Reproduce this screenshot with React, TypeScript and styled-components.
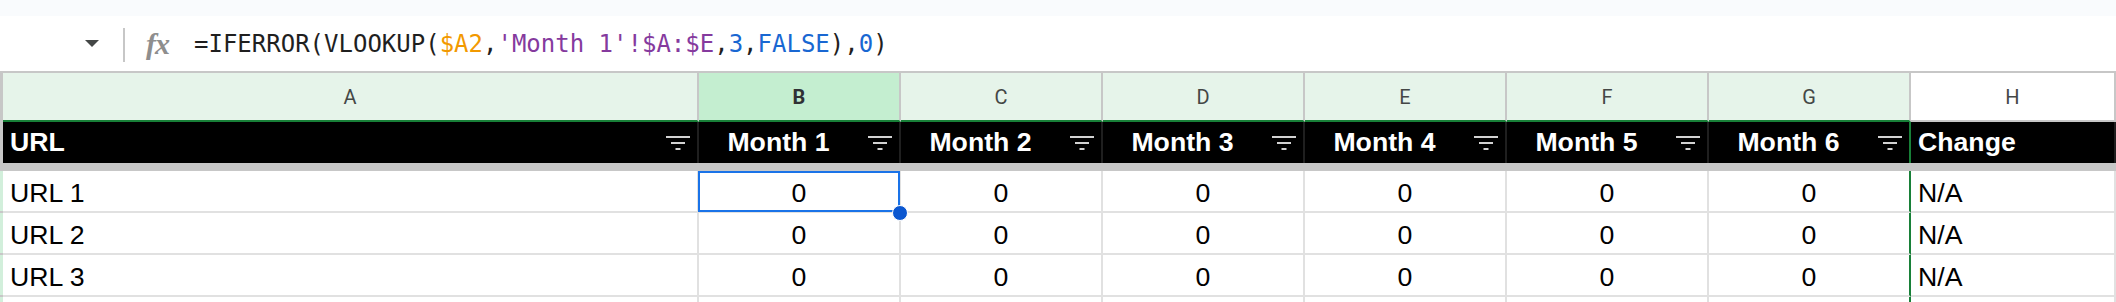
import React from 'react';
import styled, { createGlobalStyle } from 'styled-components';

const colors = {
  grid: '#c7c7c7',
  cellLine: '#e1e1e1',
  mint: '#e6f4ea',
  mintActive: '#c4eed0',
  green: '#188038',
  blue: '#1a73e8',
  handle: '#0b57d0',
  letter: '#444746',
  stripe: '#d2efdb',
};

const COLUMNS = '3px 696px repeat(6, 202px) 1fr';
const LETTERS = ['A', 'B', 'C', 'D', 'E', 'F', 'G', 'H'];
const MONTHS = ['Month 1', 'Month 2', 'Month 3', 'Month 4', 'Month 5', 'Month 6'];
const ROWS = ['URL 1', 'URL 2', 'URL 3', ''];

const GlobalStyle = createGlobalStyle`
html, body {
  margin: 0;
  padding: 0;
  background: #fff;
  overflow: hidden;
}
body {
  font-family: "Liberation Sans", Arial, sans-serif;
}`;

const Page = styled.div`
width: 2116px;
height: 302px;
overflow: hidden;`;

const TopStrip = styled.div`
height: 16px;
background: #f9fbfd;`;

const FormulaBar = styled.div`
height: 55px;
display: flex;
align-items: center;
background: #fff;`;

const NameArrow = styled.span`
margin-left: 85px;
width: 0;
height: 0;
border-left: 7.5px solid transparent;
border-right: 7.5px solid transparent;
border-top: 7px solid #444746;`;

const Divider = styled.span`
margin-left: 24px;
margin-top: 3px;
width: 2px;
height: 34px;
background: ${colors.grid};`;

const FxIcon = styled.span`
margin-left: 21px;
width: 28px;
font-family: "Liberation Serif", serif;
font-style: italic;
font-weight: bold;
font-size: 30px;
letter-spacing: -1px;
color: #8e8e8e;
line-height: 1;`;

const Formula = styled.span`
margin-left: 20px;
font-family: "DejaVu Sans Mono", "Liberation Mono", monospace;
font-size: 24px;
color: #1f1f1f;
white-space: pre;`;

const Tok = styled.span<{ $c: string }>`
color: ${(p) => p.$c};`;

const Row = styled.div`
display: grid;
grid-template-columns: ${COLUMNS};`;

const Stripe = styled.div<{ $green?: boolean }>`
background: ${(p) => (p.$green ? colors.stripe : colors.grid)};
border-bottom: ${(p) => (p.$green ? `2px solid ${colors.grid}` : 'none')};`;

const LetterCell = styled.div<{ $bg: string, $under: string, $active?: boolean }>`
box-sizing: border-box;
height: 51px;
display: flex;
align-items: center;
justify-content: center;
background: ${(p) => p.$bg};
border-top: 2px solid ${colors.grid};
border-right: 2px solid ${colors.grid};
border-bottom: 2px solid ${(p) => p.$under};
font-family: Roboto, "Liberation Sans", sans-serif;
font-size: 20px;
font-weight: ${(p) => (p.$active ? 700 : 400)};
color: ${(p) => (p.$active ? '#303134' : colors.letter)};`;

const HeadCell = styled.div<{ $center?: boolean, $edge?: boolean }>`
box-sizing: border-box;
height: 41px;
display: flex;
align-items: center;
padding: 0 7px 0 ${(p) => (p.$center ? 0 : 7)}px;
background: #000;
color: #fff;
font-weight: bold;
font-size: 26.67px;
border-right: 2px solid ${(p) => (p.$edge ? colors.green : '#1f1f1f')};
overflow: hidden;`;

const HeadLabel = styled.span<{ $center?: boolean }>`
flex: 1;
text-align: ${(p) => (p.$center ? 'center' : 'left')};
white-space: nowrap;`;

const FilterSvg = styled.svg`
flex: none;
margin-left: 10px;`;

const FreezeBar = styled.div`
height: 8px;
background: ${colors.grid};`;

const DataCell = styled.div<{ $center?: boolean, $edge?: boolean, $selected?: boolean }>`
box-sizing: border-box;
height: 42px;
display: flex;
align-items: flex-end;
justify-content: ${(p) => (p.$center ? 'center' : 'flex-start')};
padding: 0 7px 2px;
font-size: 26.67px;
color: #000;
background: #fff;
border-right: 2px solid ${(p) => (p.$edge ? colors.green : colors.cellLine)};
border-bottom: 2px solid ${colors.cellLine};
position: ${(p) => (p.$selected ? 'relative' : 'static')};
z-index: ${(p) => (p.$selected ? 1 : 'auto')};
white-space: nowrap;`;

const SelectionFrame = styled.span`
position: absolute;
top: 0;
left: -1px;
right: -1px;
bottom: -1px;
border: 2px solid ${colors.blue};
pointer-events: none;`;

const Handle = styled.span`
position: absolute;
right: -10px;
bottom: -11px;
width: 14px;
height: 14px;
border-radius: 50%;
border: 1px solid #fff;
background: ${colors.handle};`;

const FilterIcon = () => (
  <FilterSvg width="24" height="14" viewBox="0 0 24 14">
    <rect x="0" y="0" width="24" height="2" fill="#d2d2d2" />
    <rect x="5" y="6" width="14" height="2" fill="#d2d2d2" />
    <rect x="9.5" y="12" width="5" height="2" fill="#d2d2d2" />
  </FilterSvg>
);

const FormulaLine = () => (
  <Formula>
    =IFERROR(VLOOKUP(
    <Tok $c="#f29900">$A2</Tok>
    ,
    <Tok $c="#853a9e">'Month 1'!$A:$E</Tok>
    ,
    <Tok $c="#1967d2">3</Tok>
    ,
    <Tok $c="#1967d2">FALSE</Tok>
    ),
    <Tok $c="#1967d2">0</Tok>
    )
  </Formula>
);

const letterBg = (letter: string) => {
  if (letter === 'B') return colors.mintActive;
  if (letter === 'H') return '#fff';
  return colors.mint;
};

const App = () => (
  <Page>
    <GlobalStyle />
    <TopStrip />
    <FormulaBar>
      <NameArrow />
      <Divider />
      <FxIcon>fx</FxIcon>
      <FormulaLine />
    </FormulaBar>

    <Row>
      <Stripe />
      {LETTERS.map((letter) => (
        <LetterCell
          key={letter}
          $bg={letterBg(letter)}
          $under={letter === 'H' ? colors.grid : colors.green}
          $active={letter === 'B'}
        >
          {letter}
        </LetterCell>
      ))}
    </Row>

    <Row>
      <Stripe />
      <HeadCell>
        <HeadLabel>URL</HeadLabel>
        <FilterIcon />
      </HeadCell>
      {MONTHS.map((month, i) => (
        <HeadCell key={month} $center $edge={i === MONTHS.length - 1}>
          <HeadLabel $center>{month}</HeadLabel>
          <FilterIcon />
        </HeadCell>
      ))}
      <HeadCell>
        <HeadLabel>Change</HeadLabel>
      </HeadCell>
    </Row>

    <FreezeBar />

    {ROWS.map((url, r) => (
      <Row key={r}>
        <Stripe $green />
        <DataCell>{url}</DataCell>
        {MONTHS.map((month, i) => (
          <DataCell
            key={month}
            $center
            $edge={i === MONTHS.length - 1}
            $selected={r === 0 && i === 0}
          >
            {url ? '0' : ''}
            {r === 0 && i === 0 ? (
              <SelectionFrame>
                <Handle />
              </SelectionFrame>
            ) : null}
          </DataCell>
        ))}
        <DataCell>{url ? 'N/A' : ''}</DataCell>
      </Row>
    ))}
  </Page>
);

export default App;
